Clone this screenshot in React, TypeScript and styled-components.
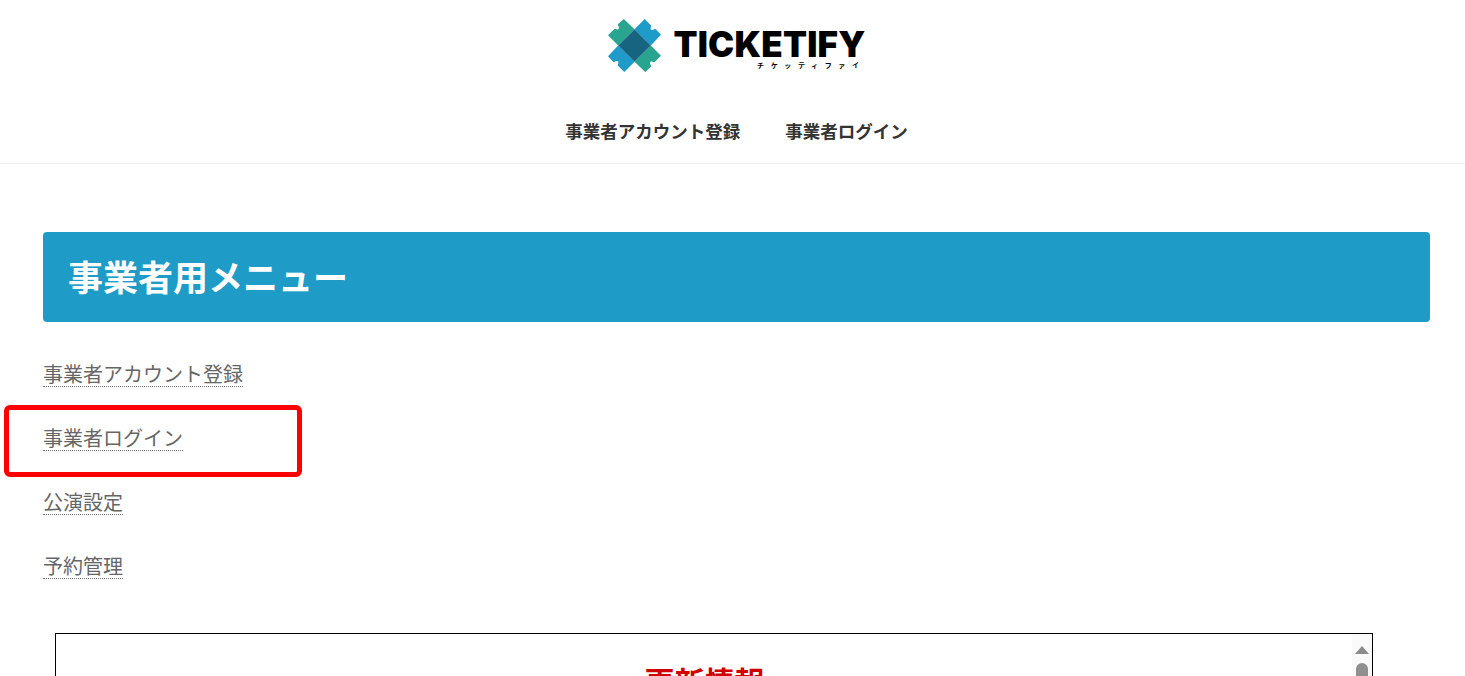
import styled, { createGlobalStyle } from "styled-components";

const GlobalStyle = createGlobalStyle`
  html, body {
    margin: 0;
    padding: 0;
    height: 676px;
    overflow: hidden;
    background: #fff;
    font-family: "Noto Sans CJK JP", "Noto Sans", sans-serif;
  }
  * {
    box-sizing: border-box;
  }
`;

const menuItems = ["事業者アカウント登録", "事業者ログイン", "公演設定", "予約管理"];

const logoArms = [
  { angle: 0, color: "#29a58f" },
  { angle: 90, color: "#1e9bc9" },
  { angle: 180, color: "#29a58f" },
  { angle: 270, color: "#1e9bc9" },
];

function LogoMark() {
  return (
    <svg width="53" height="53" viewBox="0 0 52 52">
      {logoArms.map((arm) => (
        <path
          key={arm.angle}
          d="M0 16 L6.5 9.5 Q13 12 9.5 5.5 L15.5 0 L26 10 L10 26 Z"
          fill={arm.color}
          transform={`rotate(${arm.angle} 26 26)`}
        />
      ))}
      <path d="M26 10 L42 26 L26 42 L10 26 Z" fill="#166480" />
    </svg>
  );
}

export default function App() {
  return (
    <>
      <GlobalStyle />
      <Header>
        <Logo>
          <LogoMark />
          <LogoText>
            <LogoName>TICKETIFY</LogoName>
            <LogoKana>チケッティファイ</LogoKana>
          </LogoText>
        </Logo>
        <Nav>
          <NavLink>事業者アカウント登録</NavLink>
          <NavLink>事業者ログイン</NavLink>
        </Nav>
      </Header>
      <Main>
        <Banner>事業者用メニュー</Banner>
        <MenuList>
          {menuItems.map((item) => (
            <MenuRow key={item}>
              <MenuLink>{item}</MenuLink>
            </MenuRow>
          ))}
        </MenuList>
        <NewsBox>
          <NewsBody>
            <NewsTitle>更新情報</NewsTitle>
          </NewsBody>
          <ScrollRail>
            <ScrollArrow />
            <ScrollThumb />
          </ScrollRail>
        </NewsBox>
      </Main>
      <Highlight />
    </>
  );
}

const Header = styled.header`
  height: 164px;
  padding-left: 8px;
  border-bottom: 1px solid #f0f0f0;
  display: flex;
  flex-direction: column;
  align-items: center;
`;

const Logo = styled.div`
  display: flex;
  align-items: flex-start;
  gap: 13px;
  margin-top: 19px;
  height: 53px;
`;

const LogoText = styled.div`
  display: flex;
  flex-direction: column;
  align-items: flex-end;
  margin-top: 9px;
`;

const LogoName = styled.div`
  font-family: Inter, sans-serif;
  font-weight: 900;
  font-size: 35px;
  line-height: 33px;
  height: 33px;
  letter-spacing: 0.2px;
  color: #000;
`;

const LogoKana = styled.div`
  font-size: 7px;
  font-weight: 700;
  line-height: 9px;
  letter-spacing: 6.6px;
  color: #000;
`;

const Nav = styled.nav`
  display: flex;
  gap: 45px;
  margin-top: 47px;
`;

const NavLink = styled.a`
  font-size: 17.5px;
  font-weight: 700;
  line-height: 24px;
  color: #333;
`;

const Main = styled.main`
  padding: 68px 35px 0 43px;
`;

const Banner = styled.h1`
  margin: 0;
  height: 90px;
  padding: 0 0 3px 25px;
  display: flex;
  align-items: center;
  background: #1e9bc6;
  border-radius: 4px;
  color: #fff;
  font-size: 35px;
  font-weight: 700;
`;

const MenuList = styled.ul`
  list-style: none;
  margin: 20px 0 0;
  padding: 0;
`;

const MenuRow = styled.li`
  height: 64px;
  line-height: 66px;
`;

const MenuLink = styled.a`
  display: inline-block;
  font-size: 20px;
  line-height: 24px;
  color: #666;
  border-bottom: 1px dotted #777;
`;

const NewsBox = styled.section`
  display: flex;
  width: 1318px;
  height: 320px;
  margin: 35px 0 0 12px;
  border: 1px solid #000;
`;

const NewsBody = styled.div`
  flex: 1;
  padding: 26px 0 0 1px;
  text-align: center;
`;

const NewsTitle = styled.h2`
  margin: 0;
  font-size: 30px;
  line-height: 40px;
  font-weight: 700;
  color: #d00000;
`;

const ScrollRail = styled.div`
  width: 20px;
  background: #fafafa;
  display: flex;
  flex-direction: column;
  align-items: center;
  padding-top: 12px;
`;

const ScrollArrow = styled.div`
  width: 0;
  height: 0;
  border-left: 7px solid transparent;
  border-right: 7px solid transparent;
  border-bottom: 8px solid #8c8c8c;
`;

const ScrollThumb = styled.div`
  width: 12px;
  height: 120px;
  margin-top: 9px;
  background: #8f8f8f;
  border-radius: 6px;
`;

const Highlight = styled.div`
  position: absolute;
  left: 4px;
  top: 405px;
  width: 298px;
  height: 72px;
  border: 5px solid #ff0000;
  border-radius: 6px;
`;
